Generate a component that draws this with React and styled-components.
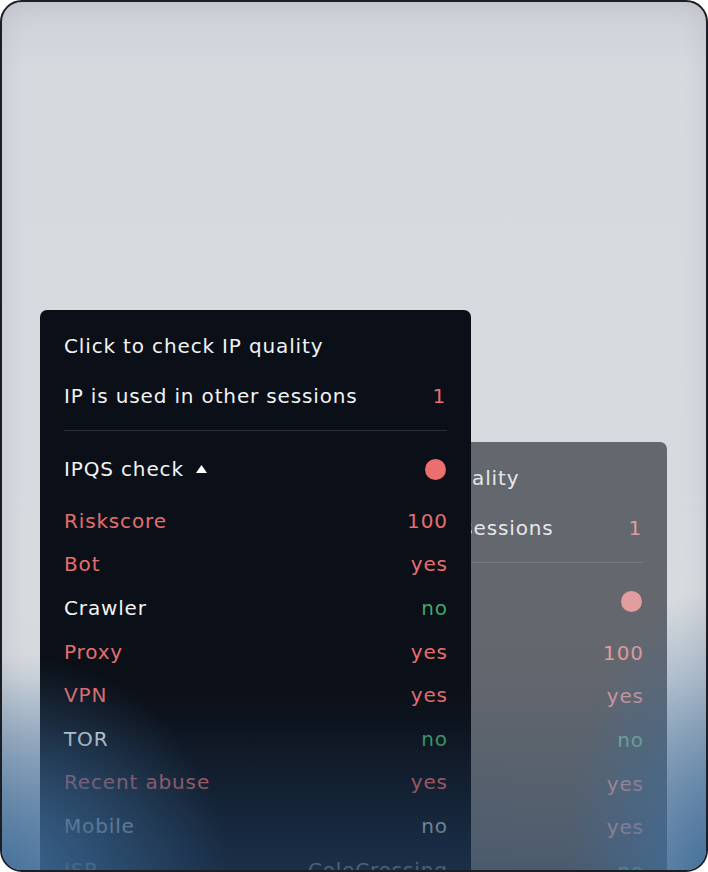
import styled, { createGlobalStyle } from "styled-components";

const GlobalStyle = createGlobalStyle`
  html, body {
    margin: 0;
    padding: 0;
    background: #ffffff;
  }
  * {
    box-sizing: border-box;
  }
`;

const rows = [
  { label: "Riskscore", value: "100", tone: "bad" },
  { label: "Bot", value: "yes", tone: "bad" },
  { label: "Crawler", value: "no", tone: "good" },
  { label: "Proxy", value: "yes", tone: "bad" },
  { label: "VPN", value: "yes", tone: "bad" },
  { label: "TOR", value: "no", tone: "good" },
  { label: "Recent abuse", value: "yes", tone: "bad" },
  { label: "Mobile", value: "no", tone: "plain" },
  { label: "ISP", value: "ColoCrossing", tone: "plain" },
];

const labelColor = {
  bad: "#e46e6e",
  good: "#f1f3f5",
  plain: "#f1f3f5",
};

const valueColor = {
  bad: "#e46e6e",
  good: "#3fa86c",
  plain: "#f1f3f5",
};

const Card = () => (
  <Panel>
    <TopRow>
      <span>Click to check IP quality</span>
    </TopRow>
    <TopRow>
      <span>IP is used in other sessions</span>
      <Count>1</Count>
    </TopRow>
    <Divider />
    <TopRow>
      <Heading>
        IPQS check
        <svg width="11" height="8" viewBox="0 0 11 8">
          <path d="M5.5 0 L11 8 L0 8 Z" fill="#ffffff" />
        </svg>
      </Heading>
      <Dot />
    </TopRow>
    <List>
      {rows.map((r) => (
        <Row key={r.label}>
          <Label $tone={r.tone}>{r.label}</Label>
          <Value $tone={r.tone}>{r.value}</Value>
        </Row>
      ))}
    </List>
    <Fade />
  </Panel>
);

export default function App() {
  return (
    <>
      <GlobalStyle />
      <Frame>
        <Stack>
          <BackLayer>
            <Card />
          </BackLayer>
          <Card />
        </Stack>
        <Glow />
      </Frame>
    </>
  );
}

const Frame = styled.div`
  position: relative;
  width: 708px;
  height: 872px;
  border: 2px solid #1b1e24;
  border-radius: 22px;
  overflow: hidden;
  background: linear-gradient(180deg, #cdd0d6 0%, #d6d9de 8%, #d7dade 70%, #cdd3da 100%);
  box-shadow: inset 0 0 24px rgba(60, 66, 80, 0.12);
  padding: 308px 0 0 38px;
  font-family: "DejaVu Sans", "Noto Sans", sans-serif;
`;

const Stack = styled.div`
  position: relative;
  width: 431px;
  z-index: 0;
`;

const BackLayer = styled.div`
  position: absolute;
  left: 196px;
  top: 132px;
  width: 100%;
  z-index: -1;
  opacity: 0.56;
`;

const Panel = styled.div`
  position: relative;
  width: 431px;
  background: #0b0f17;
  border-radius: 7px;
  padding: 11px 24px 40px;
  color: #f1f3f5;
  font-size: 20px;
`;

const Fade = styled.div`
  position: absolute;
  left: 0;
  right: 0;
  top: 410px;
  height: 170px;
  pointer-events: none;
  background: linear-gradient(180deg, rgba(22, 40, 62, 0) 0%, rgba(22, 40, 62, 0.4) 55%, rgba(22, 40, 62, 0.8) 100%);
`;

const TopRow = styled.div`
  display: flex;
  align-items: center;
  justify-content: space-between;
  height: 50px;
  letter-spacing: 0.85px;
`;

const Count = styled.span`
  color: #e46e6e;
  margin-right: 1px;
`;

const Divider = styled.div`
  height: 1px;
  background: #2b313b;
  margin: 9px 0 13px;
`;

const Heading = styled.span`
  display: flex;
  align-items: center;
  gap: 12px;

  svg {
    margin-top: -1px;
  }
`;

const Dot = styled.span`
  width: 21px;
  height: 21px;
  border-radius: 50%;
  background: #eb6f6f;
  margin-right: 1px;
`;

const List = styled.div`
  margin-top: 5px;
  display: flex;
  flex-direction: column;
`;

const Row = styled.div`
  display: flex;
  align-items: center;
  justify-content: space-between;
  height: 43.6px;
  letter-spacing: 0.85px;
`;

const Label = styled.span`
  color: ${(p) => labelColor[p.$tone]};
`;

const Value = styled.span`
  color: ${(p) => valueColor[p.$tone]};
  margin-right: -0.85px;
`;

const Glow = styled.div`
  position: absolute;
  inset: 0;
  pointer-events: none;
  background:
    radial-gradient(ellipse 32% 25% at 0% 100%, rgba(64, 110, 155, 0.9), rgba(64, 110, 155, 0) 100%),
    radial-gradient(ellipse 20% 32% at 100% 100%, rgba(64, 110, 155, 0.9), rgba(64, 110, 155, 0) 100%),
    linear-gradient(180deg, rgba(40, 75, 115, 0) 78%, rgba(40, 75, 115, 0.35) 100%);
`;
